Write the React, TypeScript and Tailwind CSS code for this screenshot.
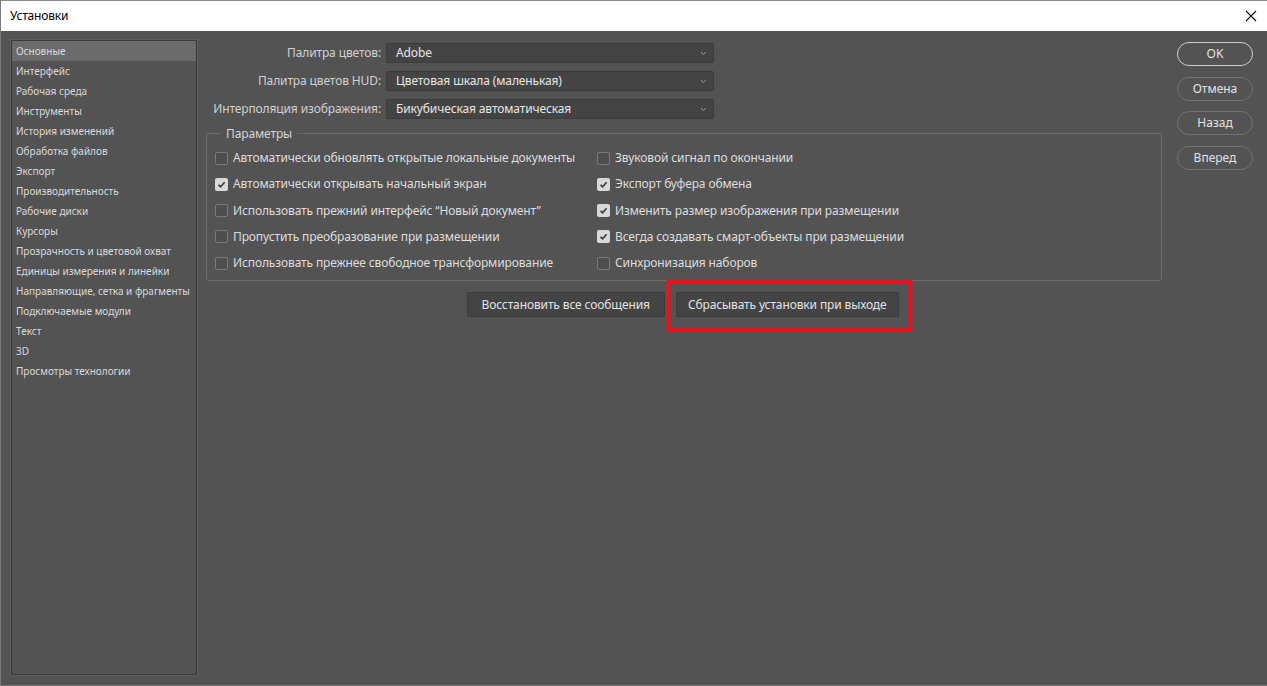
import React from "react";

const sections = [
  "Основные",
  "Интерфейс",
  "Рабочая среда",
  "Инструменты",
  "История изменений",
  "Обработка файлов",
  "Экспорт",
  "Производительность",
  "Рабочие диски",
  "Курсоры",
  "Прозрачность и цветовой охват",
  "Единицы измерения и линейки",
  "Направляющие, сетка и фрагменты",
  "Подключаемые модули",
  "Текст",
  "3D",
  "Просмотры технологии",
];

const leftOptions = [
  { label: "Автоматически обновлять открытые локальные документы", checked: false },
  { label: "Автоматически открывать начальный экран", checked: true },
  { label: "Использовать прежний интерфейс “Новый документ”", checked: false },
  { label: "Пропустить преобразование при размещении", checked: false },
  { label: "Использовать прежнее свободное трансформирование", checked: false },
];

const rightOptions = [
  { label: "Звуковой сигнал по окончании", checked: false },
  { label: "Экспорт буфера обмена", checked: true },
  { label: "Изменить размер изображения при размещении", checked: true },
  { label: "Всегда создавать смарт-объекты при размещении", checked: true },
  { label: "Синхронизация наборов", checked: false },
];

const selects = [
  { label: "Палитра цветов:", value: "Adobe" },
  { label: "Палитра цветов HUD:", value: "Цветовая шкала (маленькая)" },
  { label: "Интерполяция изображения:", value: "Бикубическая автоматическая" },
];

const Check: React.FC<{ label: string; checked: boolean }> = ({ label, checked }) => (
  <div className="h-[26.25px] flex items-center">
    {checked ? (
      <span className="w-[13px] h-[13px] rounded-[2px] bg-[#d8d8d8] flex items-center justify-center mr-[5px]">
        <svg width="9" height="9" viewBox="0 0 9 9">
          <path d="M1.5 4.8 L3.6 6.8 L7.6 2.2" fill="none" stroke="#3a3a3a" strokeWidth="1.6" />
        </svg>
      </span>
    ) : (
      <span className="w-[13px] h-[13px] rounded-[2px] border border-[#7a7a7a] bg-[#4e4e4e] mr-[5px]" />
    )}
    <span className="whitespace-nowrap">{label}</span>
  </div>
);

const SideButton: React.FC<{ label: string; primary?: boolean }> = ({ label, primary }) => (
  <button
    className={`h-[24px] w-[76px] rounded-full border text-[12px] text-[#e2e2e2] ${
      primary ? "border-[#d0d0d0] border-[1.5px]" : "border-[#727272]"
    }`}
  >
    {label}
  </button>
);

export default function App() {
  return (
    <div
      className="w-[1267px] h-[686px] bg-[#535353] flex flex-col overflow-hidden border-l border-b border-[#7a7a7a]"
      style={{ fontFamily: '"Noto Sans", "Open Sans", sans-serif' }}
    >
      <div className="h-[31px] bg-white border-t border-[#8a8a8a] flex items-center justify-between pl-[9px] pr-[10px]">
        <span className="text-[12px] text-black tracking-[-0.2px]">Установки</span>
        <svg width="12" height="12" viewBox="0 0 12 12">
          <path d="M1 1 L11 11 M11 1 L1 11" stroke="#111" strokeWidth="1.1" />
        </svg>
      </div>

      <div className="flex-1 flex pt-[9px] pb-[10px] pl-[10px]">
        <div className="w-[186px] border border-[#3a3a3a] shadow-[0_0_0_1px_#5e5e5e] flex flex-col text-[10px] text-[#dadada]">
          {sections.map((s, i) => (
            <div
              key={s}
              className={`h-[20px] flex items-center pl-[4px] ${i === 0 ? "bg-[#6b6b6b]" : ""}`}
            >
              {s}
            </div>
          ))}
        </div>

        <div className="w-[956px] ml-[9px] pt-[3px] text-[12px] tracking-[-0.12px] text-[#dedede]">
          <div className="flex flex-col gap-[8px]">
            {selects.map((s) => (
              <div key={s.label} className="flex items-center">
                <span className="w-[175px] text-right text-[#d0d0d0]">{s.label}</span>
                <div className="ml-[5px] w-[328px] h-[20px] bg-[#444444] border border-[#3c3c3c] rounded-[2px] flex items-center justify-between pl-[9px] pr-[6px]">
                  <span className="text-[#e6e6e6]">{s.value}</span>
                  <svg width="7" height="5" viewBox="0 0 7 5">
                    <path d="M1 1 L3.5 3.5 L6 1" fill="none" stroke="#9a9a9a" strokeWidth="1" />
                  </svg>
                </div>
              </div>
            ))}
          </div>

          <div className="mt-[14px] relative border border-[#6c6c6c] rounded-[2px] h-[148px] pt-[11px] pl-[8px] flex">
            <span className="absolute -top-[9px] left-[14px] px-[5px] bg-[#535353] text-[#d6d6d6]">Параметры</span>
            <div className="w-[382px] flex flex-col">
              {leftOptions.map((o) => (
                <Check key={o.label} {...o} />
              ))}
            </div>
            <div className="flex flex-col">
              {rightOptions.map((o) => (
                <Check key={o.label} {...o} />
              ))}
            </div>
          </div>

          <div className="mt-[11px] flex justify-center gap-[11px] pr-[3px]">
            <button className="h-[25px] px-[14px] bg-[#444444] border border-[#3c3c3c] rounded-[2px] text-[#e2e2e2]">
              Восстановить все сообщения
            </button>
            <div className="relative">
              <button className="h-[25px] px-[11px] bg-[#444444] border border-[#3c3c3c] rounded-[2px] text-[#e2e2e2]">
                Сбрасывать установки при выходе
              </button>
              <div className="absolute -left-[10px] -right-[13px] -top-[13px] -bottom-[14px] border-[4px] border-[#e3151e]" />
            </div>
          </div>
        </div>

        <div className="ml-[15px] pt-[2px] flex flex-col gap-[10.67px]">
          <SideButton label="OK" primary />
          <SideButton label="Отмена" />
          <SideButton label="Назад" />
          <SideButton label="Вперед" />
        </div>
      </div>
    </div>
  );
}
